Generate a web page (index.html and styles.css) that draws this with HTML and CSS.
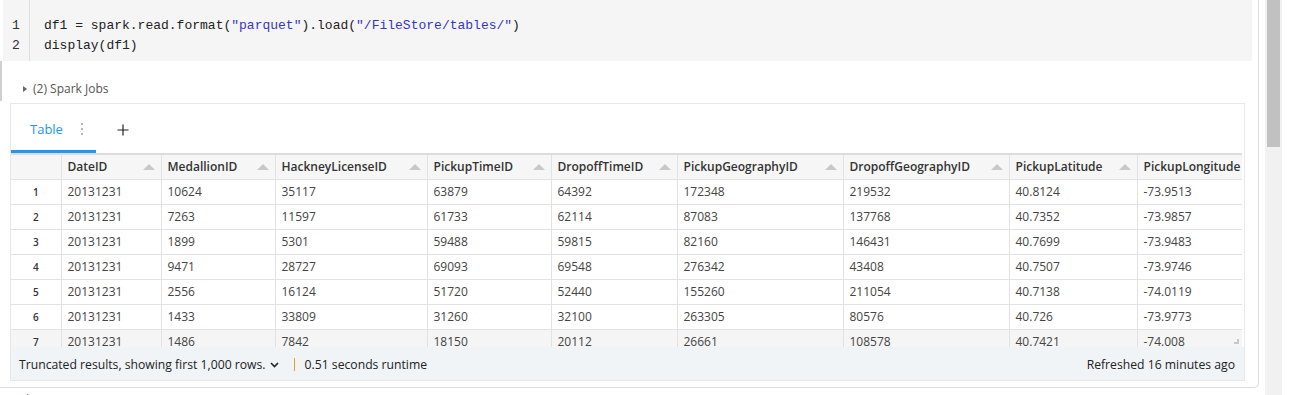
FILE: index.html
```html
<!DOCTYPE html>
<html lang="en">
<head>
  <meta charset="UTF-8">
  <title>Notebook cell</title>
  <link rel="stylesheet" href="styles.css">
</head>
<body>

<div class="page">
  <div class="column">
    <div class="cell">
      <!-- code -->
      <div class="code">
        <div class="gutter">
          <div>1</div>
          <div>2</div>
        </div>
        <div class="lines">
          <div>df1 = spark.read.format(<span class="str">"parquet"</span>).load(<span class="str">"/FileStore/tables/"</span>)</div>
          <div>display(df1)</div>
        </div>
      </div>

      <div class="jobs"><span class="caret"></span>(2) Spark Jobs</div>

      <!-- result -->
      <div class="result">
        <div class="tabs">
          <div class="tab active">
            <span>Table</span>
            <svg class="kebab" width="4" height="14" viewBox="0 0 4 14"><circle cx="2" cy="2" r="0.9" fill="#999"/><circle cx="2" cy="7" r="0.9" fill="#999"/><circle cx="2" cy="12" r="0.9" fill="#999"/></svg>
          </div>
          <svg class="plus" width="12" height="12" viewBox="0 0 12 12"><path d="M6 0.5v11M0.5 6h11" stroke="#222" stroke-width="1.2" fill="none"/></svg>
        </div>

        <div class="grid-wrap">
          <table class="grid">
            <colgroup>
              <col style="width:50px"><col style="width:100px"><col style="width:114px"><col style="width:152px"><col style="width:124px"><col style="width:126px"><col style="width:166px"><col style="width:166px"><col style="width:128px"><col style="width:150px">
            </colgroup>
            <thead>
              <tr>
                <th></th>
                <th><div class="th">DateID<i class="sort"></i></div></th>
                <th><div class="th">MedallionID<i class="sort"></i></div></th>
                <th><div class="th">HackneyLicenseID<i class="sort"></i></div></th>
                <th><div class="th">PickupTimeID<i class="sort"></i></div></th>
                <th><div class="th">DropoffTimeID<i class="sort"></i></div></th>
                <th><div class="th">PickupGeographyID<i class="sort"></i></div></th>
                <th><div class="th">DropoffGeographyID<i class="sort"></i></div></th>
                <th><div class="th">PickupLatitude<i class="sort"></i></div></th>
                <th><div class="th">PickupLongitude<i class="sort"></i></div></th>
              </tr>
            </thead>
            <tbody>
              <tr><td class="idx">1</td><td>20131231</td><td>10624</td><td>35117</td><td>63879</td><td>64392</td><td>172348</td><td>219532</td><td>40.8124</td><td>-73.9513</td></tr>
              <tr><td class="idx">2</td><td>20131231</td><td>7263</td><td>11597</td><td>61733</td><td>62114</td><td>87083</td><td>137768</td><td>40.7352</td><td>-73.9857</td></tr>
              <tr><td class="idx">3</td><td>20131231</td><td>1899</td><td>5301</td><td>59488</td><td>59815</td><td>82160</td><td>146431</td><td>40.7699</td><td>-73.9483</td></tr>
              <tr><td class="idx">4</td><td>20131231</td><td>9471</td><td>28727</td><td>69093</td><td>69548</td><td>276342</td><td>43408</td><td>40.7507</td><td>-73.9746</td></tr>
              <tr><td class="idx">5</td><td>20131231</td><td>2556</td><td>16124</td><td>51720</td><td>52440</td><td>155260</td><td>211054</td><td>40.7138</td><td>-74.0119</td></tr>
              <tr><td class="idx">6</td><td>20131231</td><td>1433</td><td>33809</td><td>31260</td><td>32100</td><td>263305</td><td>80576</td><td>40.726</td><td>-73.9773</td></tr>
              <tr class="hover"><td class="idx">7</td><td>20131231</td><td>1486</td><td>7842</td><td>18150</td><td>20112</td><td>26661</td><td>108578</td><td>40.7421</td><td>-74.008</td></tr>
            </tbody>
          </table>
          <span class="grip"></span>
        </div>

        <div class="footer">
          <div class="footer-left">
            <span>Truncated results, showing first 1,000 rows.</span>
            <svg class="chev" width="9" height="6" viewBox="0 0 9 6"><path d="M1 1l3.5 3.5L8 1" stroke="#222" stroke-width="1.6" fill="none"/></svg>
            <span class="sep"></span>
            <span>0.51 seconds runtime</span>
          </div>
          <div>Refreshed 16 minutes ago</div>
        </div>
      </div>
    </div>
    <div class="next">Cmd 3</div>
  </div>

  <div class="scrollbar"><div class="thumb"></div></div>
</div>

</body>
</html>
```

FILE: styles.css
```css
* { box-sizing: border-box; margin: 0; padding: 0; }

body {
  background: #fff;
  font-family: "Open Sans", "Noto Sans", sans-serif;
  color: #333;
  width: 1289px;
  height: 395px;
  overflow: hidden;
}

.page {
  display: flex;
  height: 395px;
}

.column {
  width: 1259px;
  margin-right: 6px;
}

.cell {
  height: 388px;
  border-right: 1px solid #dcdcdc;
  border-bottom: 1px solid #dcdcdc;
  border-bottom-right-radius: 5px;
}

/* code editor */
.code {
  display: flex;
  margin-left: 3px;
  width: 1249px;
  height: 61px;
  background: #f5f5f5;
  font-family: "Liberation Mono", "DejaVu Sans Mono", monospace;
  font-size: 13px;
  line-height: 20px;
  color: #222;
}

.gutter {
  width: 27px;
  padding-top: 16px;
  border-right: 1px solid #dedede;
  text-align: center;
  color: #333;
}

.lines {
  padding: 16px 0 0 14px;
}

.str { color: #3535c4; }

.jobs {
  display: flex;
  align-items: center;
  height: 40px;
  padding: 15px 0 0 21px;
  border-left: 2px solid #d0d0d0;
  font-size: 12px;
  color: #555;
}

.caret {
  width: 0;
  height: 0;
  border-top: 3.5px solid transparent;
  border-bottom: 3.5px solid transparent;
  border-left: 4px solid #666;
  margin-right: 6px;
}

/* result box */
.result {
  margin: 2px 0 0 10px;
  width: 1235px;
  border: 1px solid #e8e8e8;
}

.tabs {
  display: flex;
  align-items: flex-end;
  height: 49px;
}

.tab {
  display: flex;
  align-items: center;
  width: 85px;
  height: 49px;
  padding: 4px 0 0 19px;
  border-bottom: 3px solid #2196f3;
  font-size: 13px;
  color: #2196f3;
}

.kebab { margin-left: 17px; }

.plus {
  align-self: center;
  margin: 3px 0 0 21px;
}

.grid-wrap {
  position: relative;
  height: 194px;
  width: 1231px;
  overflow: hidden;
  border-top: 2px solid #dcdcdc;
}

.grid {
  table-layout: fixed;
  border-collapse: collapse;
  width: 1276px;
  font-size: 12px;
}

.grid th,
.grid td {
  height: 25px;
  border: 1px solid #e2e2e2;
  border-top: none;
  padding: 0 6px;
  text-align: left;
  white-space: nowrap;
  overflow: hidden;
}

.grid tr > :first-child { border-left: none; }

.grid th {
  height: 24px;
  background: #f6f6f6;
  font-weight: 600;
  color: #333;
}

.th {
  display: flex;
  align-items: center;
  justify-content: space-between;
}

.sort {
  flex: none;
  width: 0;
  height: 0;
  border-left: 6.5px solid transparent;
  border-right: 6.5px solid transparent;
  border-bottom: 6px solid #c8c8c8;
}

.grid td { color: #444; }

.grid td.idx {
  text-align: center;
  font-size: 10px;
  font-weight: 600;
  color: #333;
}

.grid tr.hover td { background: #f5f5f5; }

.grip {
  position: absolute;
  right: 3px;
  bottom: 3px;
  width: 5px;
  height: 5px;
  border-right: 2px solid #c8c8c8;
  border-bottom: 2px solid #c8c8c8;
}

.footer {
  display: flex;
  align-items: center;
  justify-content: space-between;
  height: 33px;
  padding: 2px 9px 0 8px;
  background: #f0f4f7;
  font-size: 12.2px;
  color: #222;
}

.footer-left {
  display: flex;
  align-items: center;
}

.chev { margin: 1px 0 0 4px; }

.sep {
  width: 1px;
  height: 13px;
  margin: 0 10px 0 15px;
  background: #eaa020;
}

.next {
  padding: 3px 0 0 3px;
  font-size: 12px;
  color: #555;
}

.scrollbar {
  width: 17px;
  height: 395px;
  background: #f1f1f1;
  padding: 0 2px;
}

.thumb {
  height: 147px;
  background: #c1c1c1;
}
```
